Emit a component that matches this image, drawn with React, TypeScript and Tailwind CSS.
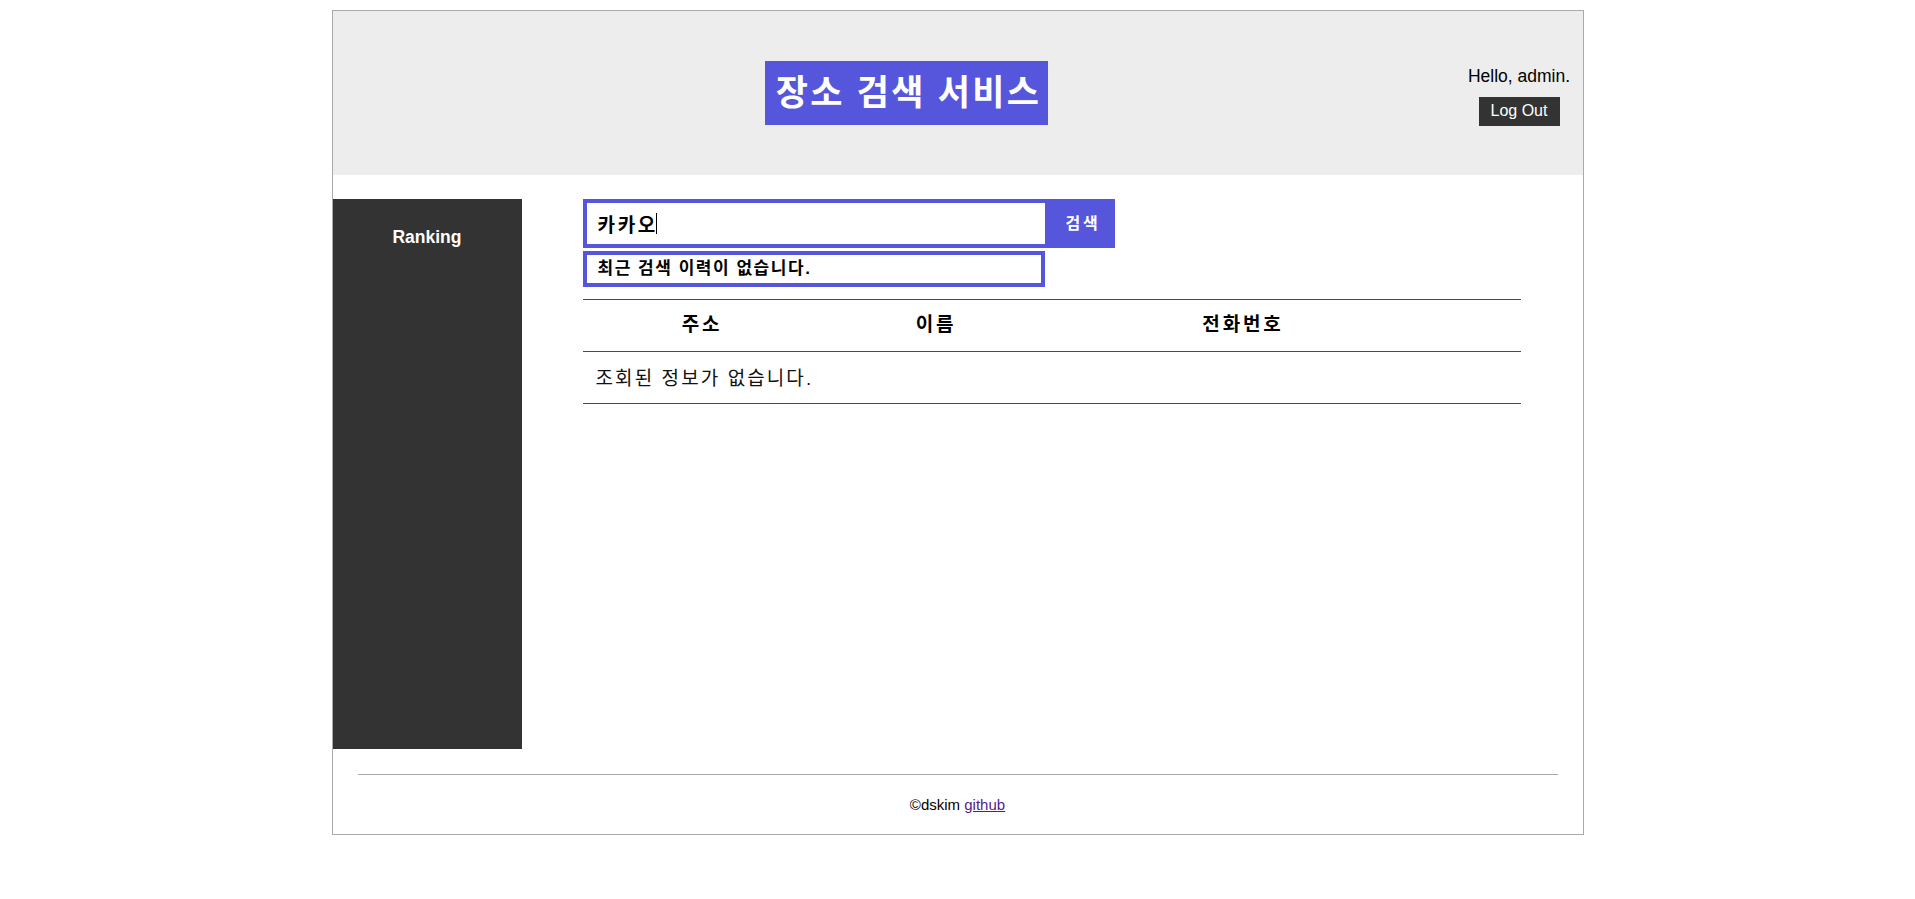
import { useEffect, useRef, useState } from 'react';

const FONT = { fontFamily: '"Liberation Sans", "Noto Sans CJK KR", Arial, sans-serif' };

/**
 * Header: title badge centered in the free space, user box on the right.
 */
function Header() {
  return (
    <header className="flex h-[164px] items-center bg-[#ededed]">
      <div className="flex flex-1 justify-center pl-[13px]">
        <h1 className="flex h-[64px] w-[283px] items-center justify-center bg-[#5656dd] pl-[4px] text-[35px] font-bold tracking-[0.065em] text-white">
          장소 검색 서비스
        </h1>
      </div>
      <div className="mr-[12px] mt-[5px] flex w-[103px] flex-col items-center">
        <p className="whitespace-nowrap text-[17.5px] leading-[20px] text-black">Hello, admin.</p>
        <button
          type="button"
          className="mt-[11px] h-[29px] w-[81px] bg-[#333333] text-[16px] text-white"
        >
          Log Out
        </button>
      </div>
    </header>
  );
}

/**
 * Search box with recent history and results table.
 */
function SearchPanel() {
  const [keyword, setKeyword] = useState('카카오');
  const inputRef = useRef<HTMLInputElement>(null);

  useEffect(() => {
    const el = inputRef.current;
    if (el) {
      el.focus();
      el.setSelectionRange(el.value.length, el.value.length);
    }
  }, []);

  return (
    <div className="ml-[61px] w-[938px]">
      <div className="flex">
        <div className="relative h-[49px] w-[466px]">
          <input
            ref={inputRef}
            value={keyword}
            onChange={(e) => setKeyword(e.target.value)}
            className="h-full w-full border-4 border-[#5656dd] pl-[11px] text-[19px] font-bold tracking-[0.14em] text-black caret-transparent outline-none"
          />
          {/* drawn caret so the focused state shows in a still picture */}
          <div className="pointer-events-none absolute inset-0 flex items-center pl-[15px] text-[19px] font-bold tracking-[0.14em]">
            <span className="text-transparent">{keyword}</span>
            <span className="-ml-[2px] h-[21px] w-px bg-black" />
          </div>
        </div>
        <button
          type="button"
          className="h-[49px] w-[66px] bg-[#5656dd] pl-[3px] text-[16px] font-bold tracking-[0.18em] text-white"
        >
          검색
        </button>
      </div>
      <div className="mt-[3px] flex h-[36px] w-[462px] items-center border-4 border-[#5656dd] pl-[11px] text-[17px] font-bold tracking-[0.09em] text-black">
        최근 검색 이력이 없습니다.
      </div>

      <div className="mt-[12px] border-t border-[#4a4a4a]">
        <div className="grid h-[52px] grid-cols-[236px_232px_382px_88px] items-center border-b border-[#4a4a4a] text-[19px] font-bold tracking-[0.15em] text-black">
          <span className="pl-[3px] text-center">주소</span>
          <span className="pl-[3px] text-center">이름</span>
          <span className="pl-[3px] text-center">전화번호</span>
          <span />
        </div>
        <div className="flex h-[52px] items-center border-b border-[#4a4a4a] pl-[13px] pt-[3px] text-[19px] tracking-[0.11em] text-[#111]">
          조회된 정보가 없습니다.
        </div>
      </div>
    </div>
  );
}

export default function App() {
  return (
    <div className="min-h-screen bg-white pt-[10px]" style={FONT}>
      <div className="mx-auto w-[1252px] border border-[#aaaaaa]">
        <Header />

        <main className="flex pt-[24px]">
          <nav className="flex h-[550px] w-[189px] shrink-0 justify-center bg-[#333333] pt-[28px]">
            <span className="text-[17.5px] font-bold leading-[20px] text-white">Ranking</span>
          </nav>
          <SearchPanel />
        </main>

        <footer className="px-[25px] pt-[25px]">
          <hr className="border-t border-[#aaaaaa]" />
          <p className="pb-[21px] pt-[21px] text-center text-[15px] leading-[17px] text-black">
            ©dskim{' '}
            <a href="#" className="text-[#551a8b] underline">
              github
            </a>
          </p>
        </footer>
      </div>
    </div>
  );
}
